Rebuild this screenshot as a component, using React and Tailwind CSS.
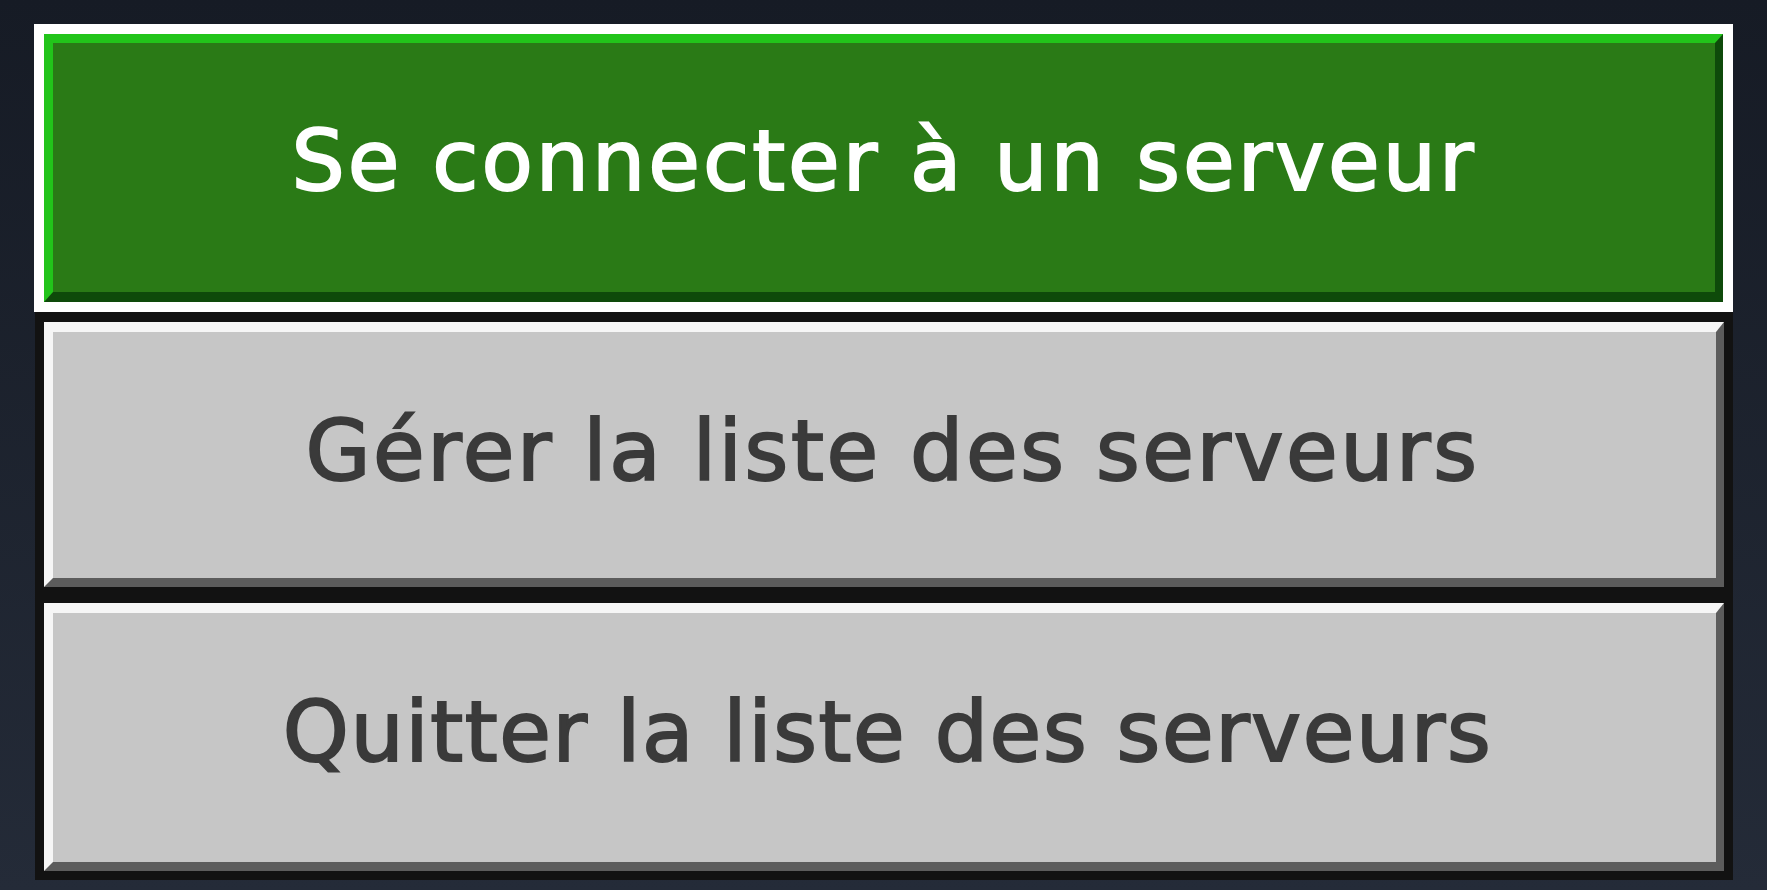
export default function App() {
  const font = { fontFamily: '"DejaVu Sans", "Noto Sans", sans-serif' };

  return (
    <div className="h-[890px] w-full overflow-hidden bg-linear-to-b from-[#161b25] to-[#242b38] pt-[24px] pl-[34px]">
      <div className="flex w-[1699px] flex-col">
        {/* Selected button */}
        <div className="h-[288px] border-[10px] border-white">
          <div className="flex h-full items-center justify-center border-t-[9px] border-l-[9px] border-r-[8px] border-b-[10px] border-t-[#22c41a] border-l-[#22c41a] border-r-[#0e4a0a] border-b-[#0e4a0a] bg-[#2a7a16] pb-[14px]">
            <span
              className="text-[84px] font-normal leading-none tracking-[3px] text-white [-webkit-text-stroke:2px_#ffffff]"
              style={font}
            >
              Se connecter à un serveur
            </span>
          </div>
        </div>

        {/* Normal buttons */}
        <div className="ml-[1px] h-[283px] border-x-[9px] border-t-[10px] border-b-[8px] border-[#121212]">
          <div className="flex h-full items-center justify-center border-t-[10px] border-l-[9px] border-r-[8px] border-b-[9px] border-t-[#f6f6f6] border-l-[#f6f6f6] border-r-[#5c5c5c] border-b-[#5c5c5c] bg-[#c6c6c6] pb-[8px] pl-[16px]">
            <span
              className="text-[84px] font-normal leading-none tracking-[2.6px] text-[#3a3a3a] [-webkit-text-stroke:2px_#3a3a3a]"
              style={font}
            >
              Gérer la liste des serveurs
            </span>
          </div>
        </div>

        <div className="ml-[1px] h-[285px] border-x-[9px] border-t-[8px] border-b-[9px] border-[#121212]">
          <div className="flex h-full items-center justify-center border-t-[10px] border-l-[9px] border-r-[8px] border-b-[9px] border-t-[#f6f6f6] border-l-[#f6f6f6] border-r-[#5c5c5c] border-b-[#5c5c5c] bg-[#c6c6c6] pb-[12px] pl-[6px]">
            <span
              className="text-[84px] font-normal leading-none tracking-[1.6px] text-[#3a3a3a] [-webkit-text-stroke:2px_#3a3a3a]"
              style={font}
            >
              Quitter la liste des serveurs
            </span>
          </div>
        </div>
      </div>
    </div>
  );
}
